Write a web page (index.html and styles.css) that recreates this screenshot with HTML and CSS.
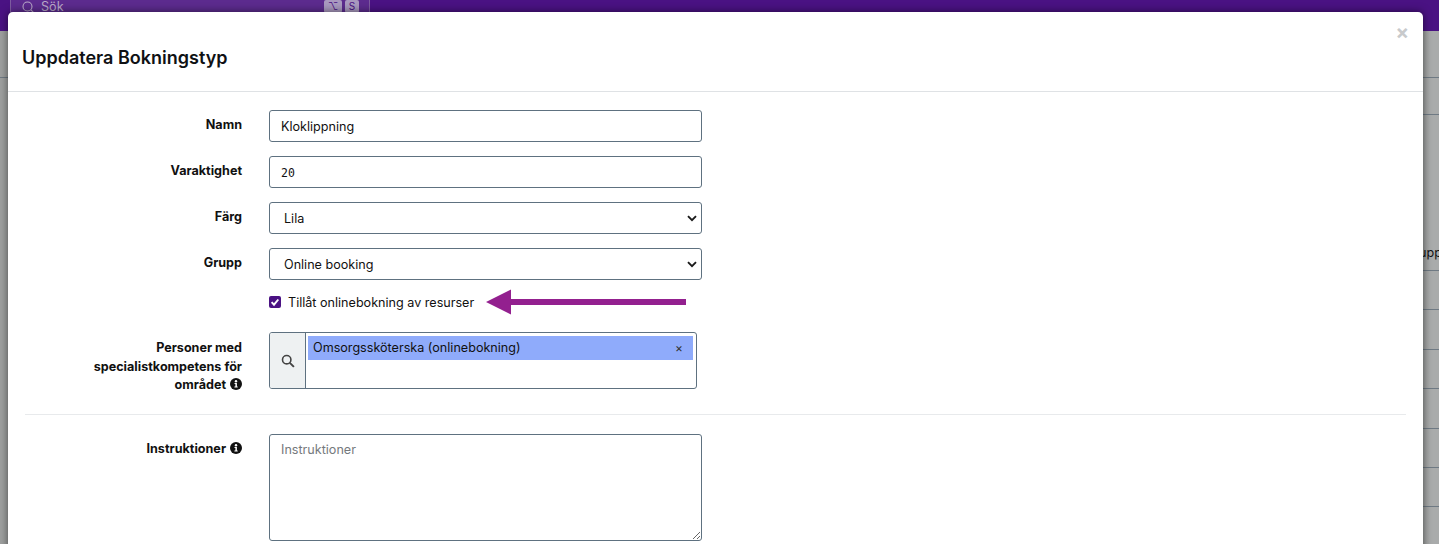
FILE: index.html
```html
<!DOCTYPE html>
<html lang="sv">
<head>
<meta charset="utf-8">
<title>Uppdatera Bokningstyp</title>
<link rel="stylesheet" href="styles.css">
</head>
<body>
<div class="backdrop-page">
  <header class="topbar">
    <div class="search">
      <svg class="search-icon" width="13" height="13" viewBox="0 0 13 13"><circle cx="5.500" cy="5.500" r="4.500" fill="none" stroke="currentColor" stroke-width="1.100"/><path d="M8.800 8.800l3.400 3.400" stroke="currentColor" stroke-width="1.100"/></svg>
      <span class="search-text">Sök</span>
      <span class="kbd kbd-wide">⌥</span><span class="kbd">S</span>
    </div>
  </header>
  <div class="row row-a"></div>
  <div class="rows">
    <div class="row row-b"></div>
    <div class="row row-c"><span class="cell">Grupp</span></div>
    <div class="row row-d"></div>
    <div class="row row-d"></div>
    <div class="row row-d"></div>
    <div class="row row-d"></div>
    <div class="row row-d"></div>
    <div class="row row-d"></div>
  </div>
</div>
<section class="modal">
  <div class="modal-head">
    <h1 class="modal-title">Uppdatera Bokningstyp</h1>
    <span class="close">×</span>
  </div>
  <form class="modal-body">
    <div class="field">
      <label class="label">Namn</label>
      <input class="control" type="text" value="Kloklippning">
    </div>
    <div class="field">
      <label class="label">Varaktighet</label>
      <input class="control mono" type="text" value="20">
    </div>
    <div class="field">
      <label class="label">Färg</label>
      <div class="control select"><span>Lila</span><svg class="chevron" width="10" height="7" viewBox="0 0 10 7"><path d="M1 1.200l4 4 4-4" fill="none" stroke="#1a1a1a" stroke-width="1.900"/></svg></div>
    </div>
    <div class="field">
      <label class="label">Grupp</label>
      <div class="control select"><span>Online booking</span><svg class="chevron" width="10" height="7" viewBox="0 0 10 7"><path d="M1 1.200l4 4 4-4" fill="none" stroke="#1a1a1a" stroke-width="1.900"/></svg></div>
    </div>
    <div class="check-row">
      <span class="checkbox"><svg width="12" height="12" viewBox="0 0 12 12"><path d="M2.600 6.200l2.400 2.500 4.300-5.200" fill="none" stroke="#fff" stroke-width="1.900"/></svg></span>
      <span class="check-label">Tillåt onlinebokning av resurser</span>
      <svg class="arrow" width="202" height="26" viewBox="0 0 202 26"><path d="M0 13L25 .5V10H200v6H25v9.500z" fill="#93208f"/></svg>
    </div>
    <div class="field multi-field">
      <label class="label">Personer med specialistkompetens för området <svg class="info" width="12" height="12" viewBox="0 0 12 12"><circle cx="6" cy="6" r="6" fill="#111"/><circle cx="6" cy="3.200" r="1.200" fill="#fff"/><path d="M4.500 5h2.400v3.500h.8v1.100H4.400V8.500h1V6.100h-.9z" fill="#fff"/></svg></label>
      <div class="multi">
        <span class="addon"><svg width="14" height="14" viewBox="0 0 13 13"><circle cx="5.300" cy="5.300" r="3.900" fill="none" stroke="#444" stroke-width="1.500"/><path d="M8.200 8.200l3.800 3.800" stroke="#444" stroke-width="1.800"/></svg></span>
        <div class="multi-area">
          <div class="chip"><span>Omsorgssköterska (onlinebokning)</span><span class="chip-x">×</span></div>
        </div>
      </div>
    </div>
    <hr class="divider">
    <div class="field">
      <label class="label">Instruktioner <svg class="info" width="12" height="12" viewBox="0 0 12 12"><circle cx="6" cy="6" r="6" fill="#111"/><circle cx="6" cy="3.200" r="1.200" fill="#fff"/><path d="M4.500 5h2.400v3.500h.8v1.100H4.400V8.500h1V6.100h-.9z" fill="#fff"/></svg></label>
      <textarea class="control area" placeholder="Instruktioner"></textarea>
    </div>
  </form>
</section>
</body>
</html>
```
FILE: styles.css
```css
* { box-sizing: border-box; }
html, body { margin: 0; height: 544px; overflow: hidden; }
body { font-family: Inter, "Liberation Sans", sans-serif; background: linear-gradient(90deg, #9fa1a0 0, #9fa1a0 1423px, #a9abab 1430px); color: #111; position: relative; }

.topbar { height: 31px; background: #4a1283; padding-left: 10px; }
.search { width: 360px; height: 31px; display: flex; align-items: flex-start; gap: 6px; padding: 0 10px 0 11px; background: #5c2b8e; border: 1px solid #7d5c9f; border-width: 0 1px; color: #b9a9c9; font-size: 12.600px; line-height: 14px; }
.search-icon { flex: none; margin-top: 1px; }
.search-text { flex: 1; }
.kbd { width: 14px; height: 13px; margin-left: -3px; background: #a999bf; color: #4a1283; border-radius: 2px; font-size: 10px; line-height: 13px; text-align: center; }
.kbd-wide { width: 18px; }

.row { border-bottom: 1px solid #6f7a84; }
.row-a { height: 47px; }
.rows { margin-left: 1300px; }
.row-b { height: 37px; }
.row-c { height: 156px; display: flex; align-items: flex-end; justify-content: flex-end; padding-bottom: 9px; font-size: 12.600px; line-height: 16px; white-space: nowrap; }
.row-c .cell { margin-right: -3px; }
.row-d { height: 39.400px; }

.modal { position: absolute; left: 8px; top: 12px; width: 1415px; height: 640px; background: #fff; border-radius: 5px 5px 0 0; box-shadow: 0 0 9px rgba(0, 0, 0, .55); }
.modal-head { height: 80px; border-bottom: 1px solid #dfe2e5; padding: 36px 14px 0; position: relative; }
.modal-title { margin: 0; font-size: 18px; line-height: 20px; font-weight: 600; color: #0f1114; }
.close { position: absolute; right: 14px; top: 9px; color: #c8cacc; font-size: 20px; line-height: 22px; font-weight: 700; }

.modal-body { padding: 18px 17px 0; }
.field { display: grid; grid-template-columns: 217px 433px; column-gap: 27px; margin-bottom: 14px; }
.label { font-size: 12.600px; line-height: 18.500px; font-weight: 700; text-align: right; padding: 6px 0 0 20px; }
.info { vertical-align: -1px; margin-left: 1px; }
.control { display: block; width: 433px; height: 32px; padding: 0 11px; background: #fff; border: 1px solid #5e7180; border-radius: 3px; font: 12.600px/30px Inter, "Liberation Sans", sans-serif; color: #111; outline: none; }
.mono { font-family: "DejaVu Sans Mono", monospace; font-size: 11.500px; padding-top: 1px; }
.select { display: flex; align-items: center; justify-content: space-between; padding: 1px 4px 0 14px; }
.chevron { flex: none; }

.check-row { display: flex; align-items: center; height: 26px; margin: -5px 0 0 244px; }
.checkbox { width: 12px; height: 12px; background: #4a1283; border-radius: 2px; display: flex; }
.check-label { font-size: 12.600px; margin-left: 7px; }
.arrow { margin-left: 12px; }

.multi-field { margin-top: 17px; margin-bottom: 19.500px; }
.multi-field .label { padding-top: 7px; }
.multi { width: 428px; height: 57px; display: flex; border: 1px solid #5e7180; border-radius: 3px; overflow: hidden; }
.addon { width: 36px; flex: none; background: #eef1f2; border-right: 1px solid #5e7180; display: flex; align-items: center; justify-content: center; }
.multi-area { flex: 1; padding: 3px 3px 0 2px; }
.chip { height: 24px; background: #8fabfb; display: flex; align-items: center; justify-content: space-between; padding: 0 10px 2px 5px; font-size: 12.600px; }
.chip-x { color: #333; font-size: 12px; }

.divider { border: 0; border-top: 1px solid #e8eaec; margin: 0 0 19px; }
.area { height: 107px; padding: 7px 11px; line-height: 16px; resize: vertical; }
.area::placeholder { color: #75797d; opacity: 1; }
```
